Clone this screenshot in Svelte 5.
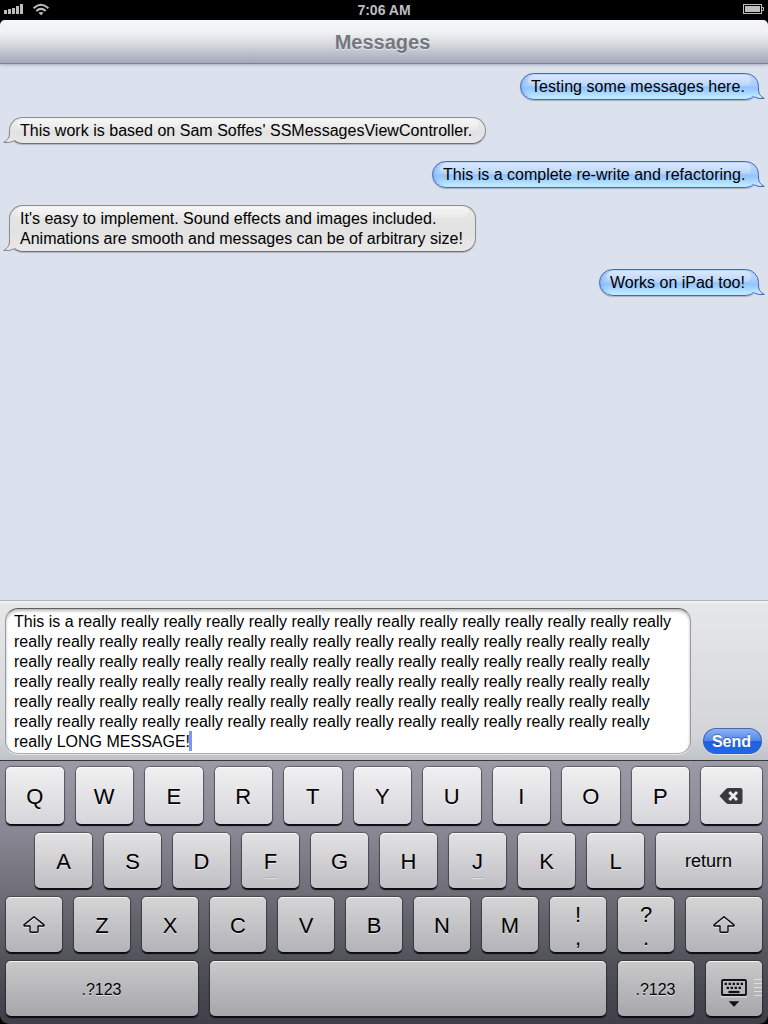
<script>
  const messages = [
    { side: 'out', lines: ['Testing some messages here.'], width: 239, spacing: 0.05 },
    { side: 'in', lines: ["This work is based on Sam Soffes' SSMessagesViewController."], width: 477, spacing: 0.025 },
    { side: 'out', lines: ['This is a complete re-write and refactoring.'], width: 327, spacing: 0 },
    {
      side: 'in',
      lines: [
        "It's easy to implement. Sound effects and images included.",
        'Animations are smooth and messages can be of arbitrary size!'
      ],
      width: 467,
      spacing: 0
    },
    { side: 'out', lines: ['Works on iPad too!'], width: 160, spacing: 0 }
  ];

  const really = (n) => Array(n).fill('really').join(' ');
  const draft = [
    'This is a ' + really(14),
    really(15),
    really(15),
    really(15),
    really(15),
    really(15),
    'really LONG MESSAGE!'
  ];

  const row1 = 'QWERTYUIOP'.split('');
  const row2 = 'ASDFGHJKL'.split('');
  const row3 = 'ZXCVBNM'.split('');
</script>

{#snippet shift()}
  <svg width="24" height="20" viewBox="0 0 24 20">
    <path d="M12 1.7 L2 9.9 Q1.7 11 3 11 H8 V16.2 Q8 17.2 9 17.2 H15 Q16 17.2 16 16.2 V11 H21 Q22.3 11 22 9.9 Z" fill="none" stroke="#ececee" stroke-width="1.3" transform="translate(0 1)" />
    <path d="M12 1.7 L2 9.9 Q1.7 11 3 11 H8 V16.2 Q8 17.2 9 17.2 H15 Q16 17.2 16 16.2 V11 H21 Q22.3 11 22 9.9 Z" fill="none" stroke="#0a0a0a" stroke-width="1.4" stroke-linejoin="round" />
  </svg>
{/snippet}

<div class="screen">
  <div class="status">
    <svg class="left" width="50" height="20" viewBox="0 0 50 20">
      <g fill="#bdbdbf">
        <rect x="4" y="10" width="3" height="4" />
        <rect x="8" y="9" width="3" height="5" />
        <rect x="12" y="8" width="3" height="6" />
        <rect x="16" y="6" width="3" height="8" />
        <rect x="20" y="4" width="3" height="10" />
        <path d="M41 15.2 L38.4 12.8 Q41 11 43.6 12.8 Z" />
      </g>
      <g fill="none" stroke="#bdbdbf" stroke-width="2">
        <path d="M33.6 8.2 Q41 1.4 48.4 8.2" />
        <path d="M36.3 11 Q41 6.8 45.7 11" />
      </g>
    </svg>
    <span>7:06 AM</span>
    <svg class="right" width="26" height="20" viewBox="0 0 26 20">
      <rect x="1.5" y="4.5" width="18" height="9" fill="none" stroke="#bdbdbf" />
      <rect x="3" y="6" width="15" height="6" fill="#bdbdbf" />
      <path d="M20 7.5 H21.5 V10.5 H20" fill="none" stroke="#bdbdbf" />
    </svg>
  </div>
  <div class="nav-back"><header>Messages</header></div>

  <main>
    {#each messages as m}
      <div class="bubble {m.side}" style="width: {m.width}px; letter-spacing: {m.spacing}px">
        <div class="gloss"></div>
        {#each m.lines as line}<p>{line}</p>{/each}
        <svg class="tail" width="24" height="17" viewBox="0 0 24 17">
          <defs>
            <linearGradient id="blue" x1="0" y1="0" x2="0" y2="1">
              <stop offset="0" stop-color="#93c2fb" /><stop offset=".9" stop-color="#c6edff" />
            </linearGradient>
            <linearGradient id="grey" x1="0" y1="0" x2="0" y2="1">
              <stop offset="0" stop-color="#e1e1e1" /><stop offset="1" stop-color="#e9e9e9" />
            </linearGradient>
          </defs>
          <path class="fill" d="M14.5 2 H16.5 C16.3 7.5 18.5 10.5 22.3 12.4 Q17 13.4 12.5 11 L10.8 9.6 Z" />
          <path class="line" d="M16.5 2 C16.3 7.5 18.5 10.5 22.3 12.4 Q17 13.4 12.3 11" />
        </svg>
      </div>
    {/each}
  </main>

  <section class="composer">
    <div class="field">
      {#each draft as line, i}
        <p>{line}{#if i === draft.length - 1}<i class="caret"></i>{/if}</p>
      {/each}
    </div>
    <button class="send">Send</button>
  </section>

  <div class="kb-back">
    <section class="keyboard">
      <div class="row r1">
        {#each row1 as k}<div class="key">{k}</div>{/each}
        <div class="key del">
          <svg width="24" height="16" viewBox="0 0 24 16">
            <path d="M.5 8 L7 1 Q8 0 9.5 0 H21.5 Q23.5 0 23.5 2 V14 Q23.5 16 21.5 16 H9.5 Q8 16 7 15 Z" fill="#3a3a3a" />
            <path d="M10.3 4 L18 12 M18 4 L10.3 12" stroke="#ececef" stroke-width="2.8" />
          </svg>
        </div>
      </div>
      <div class="row r2">
        {#each row2 as k}<div class="key">{k}{#if k === 'F' || k === 'J'}<i class="ridge"></i>{/if}</div>{/each}
        <div class="key word">return</div>
      </div>
      <div class="row r3">
        <div class="key shift">{@render shift()}</div>
        {#each row3 as k}<div class="key">{k}</div>{/each}
        <div class="key two"><span>!</span><span>,</span></div>
        <div class="key two"><span>?</span><span>.</span></div>
        <div class="key shift">{@render shift()}</div>
      </div>
      <div class="row r4">
        <div class="key num">.?123</div>
        <div class="key"></div>
        <div class="key num">.?123</div>
        <div class="key hide">
          <svg width="56" height="55" viewBox="0 0 56 55">
            <rect x="16" y="19" width="24" height="15" fill="none" stroke="#111" stroke-width="1.8" rx="1" />
            <path d="M15 35.8 H41" stroke="#e0e0e2" />
            <g stroke="#111" stroke-width="2.2">
              <path d="M18.6 22.8 H38" stroke-dasharray="2.4 1.6" />
              <path d="M20.6 26.8 H36" stroke-dasharray="2.4 1.6" />
              <path d="M22.5 31 H33.5" />
            </g>
            <path d="M22.7 40.3 H33.3 L28 45.8 Z" fill="#111" />
            <path d="M48 18.5 H56 M48 22.5 H56 M48 26.5 H56 M48 30.5 H56 M48 34.5 H56" stroke="#dedee0" stroke-width="1.2" />
          </svg>
        </div>
      </div>
    </section>
  </div>
</div>

<style>
  :global(body) { margin: 0; }
  .screen {
    width: 768px;
    height: 1024px;
    display: flex;
    flex-direction: column;
    overflow: hidden;
    background: #dbe1ed;
    font-family: "Liberation Sans", Arial, sans-serif;
    color: #000;
  }
  p { margin: 0; white-space: nowrap; }
  svg { display: block; }

  .status {
    height: 20px;
    flex: none;
    display: grid;
    grid-template-columns: 1fr auto 1fr;
    background: #000;
    color: #bfbfc1;
    font-weight: bold;
    font-size: 14px;
    line-height: 21px;
  }
  .status .right { justify-self: end; }

  .nav-back { height: 44px; flex: none; background: #000; }
  header {
    height: 43px;
    border-bottom: 1px solid #7d8093;
    border-radius: 5px 5px 0 0;
    background: linear-gradient(#f6f7f9, #eff0f3 30%, #d8dade 56%, #bec1ce 76%, #a5a8b8);
    box-shadow: 0 1px 3px rgba(90, 100, 120, .4);
    color: #71787f;
    font-weight: bold;
    font-size: 20px;
    line-height: 45px;
    text-align: center;
    text-indent: -3px;
    text-shadow: 0 1px 0 rgba(255, 255, 255, .5);
  }

  main {
    flex: 1;
    min-height: 0;
    display: flex;
    flex-direction: column;
    gap: 17px;
    padding: 9px;
  }
  .bubble {
    position: relative;
    box-sizing: border-box;
    padding: 2.5px 10px 2.5px;
    border: 1px solid;
    border-radius: 14px;
    font-size: 16px;
    line-height: 20px;
  }
  .bubble p { position: relative; z-index: 2; }
  .out {
    align-self: flex-end;
    border-color: #4466b4;
    background: linear-gradient(#c3daf9, #a9cdfb 45%, #93c4fc 55%, #a8d6ff 75%, #cbf2ff);
    box-shadow: 0 1px 1px rgba(80, 90, 120, .35), inset 3px 0 4px -2px #79acf5;
  }
  .in {
    align-self: flex-start;
    border-color: #8d8d8f;
    border-bottom-color: #6f6f71;
    background: linear-gradient(#f0f0f0, #e4e4e4 12px, #e2e2e2 60%, #e9e9e9);
    box-shadow: 0 1px 1px rgba(80, 80, 90, .3);
  }
  .gloss {
    position: absolute;
    inset: 1px 7px auto 7px;
    height: 11px;
    border-radius: 7px;
    background: linear-gradient(rgba(255, 255, 255, .4), rgba(255, 255, 255, .16));
  }
  .tail { position: absolute; right: -8px; bottom: -4px; }
  .in .tail { right: auto; left: -8px; transform: scaleX(-1); }
  .tail .line { fill: none; stroke-width: 1; stroke: #4466b4; }
  .tail .fill { fill: url(#blue); }
  .in .line { stroke: #858587; }
  .in .fill { fill: url(#grey); }

  .composer {
    height: 160px;
    flex: none;
    box-sizing: border-box;
    display: flex;
    align-items: flex-end;
    gap: 12px;
    padding: 0 6px 6px 5px;
    border-top: 1px solid #b2b5bc;
    background: linear-gradient(#f6f7f8, #e6e7e9 3px, #dcdde1 50%, #d3d5d9 85%, #bfc2c7);
  }
  .field {
    box-sizing: border-box;
    width: 686px;
    height: 146px;
    padding: 3px 8px;
    border: 1px solid #98989b;
    border-top-color: #5f5f62;
    border-bottom-color: #aaaaad;
    border-radius: 13px;
    background: #fff;
    box-shadow: inset 0 2px 3px rgba(0, 0, 0, .28), 0 1px 0 rgba(255, 255, 255, .6);
    font-size: 16px;
    line-height: 20px;
  }
  .caret {
    display: inline-block;
    width: 3px;
    height: 20px;
    margin: -1px 0 0 -1px;
    vertical-align: top;
    background: #7f97ee;
  }
  .send {
    width: 59px;
    height: 26px;
    padding: 0;
    border: 1px solid #2b5dc4;
    border-top-color: #4a69ad;
    border-radius: 13px;
    background: linear-gradient(#8eb2f3, #5389ea 48%, #1f60e0 52%, #1f68ea);
    box-shadow: 0 1px 0 rgba(255, 255, 255, .5);
    color: #fff;
    font: bold 16px/25px "Liberation Sans", Arial, sans-serif;
    text-indent: -2px;
    text-shadow: 0 -1px 0 rgba(0, 0, 0, .35);
  }

  .kb-back { height: 264px; flex: none; background: #000; }
  .keyboard {
    height: 264px;
    box-sizing: border-box;
    display: flex;
    flex-direction: column;
    gap: 9px;
    padding: 6px 6px 0;
    border-top: 1px solid #37373b;
    border-radius: 0 0 9px 9px;
    background: linear-gradient(#9d9aa8, #8b8995 25%, #6d6c76 52%, #52525a 76%, #3f3e49);
  }
  .row { display: grid; column-gap: 12px; height: 55px; }
  .r1 { height: 57px; grid-template-columns: repeat(10, 57.5px) 61px; }
  .r2 { padding-left: 29px; grid-template-columns: repeat(9, 57px) 106px; }
  .r3 { grid-template-columns: repeat(10, 56px) 76px; }
  .r4 { grid-template-columns: 192px 396px 76px 56px; }
  .key {
    position: relative;
    display: flex;
    align-items: center;
    justify-content: center;
    box-sizing: border-box;
    padding-top: 2px;
    border-radius: 5px;
    font-size: 22px;
    line-height: 24px;
    box-shadow: 0 0 1px 1px rgba(25, 25, 30, .45), 0 2px 1px #08080a, inset 0 1px 0 rgba(255, 255, 255, .8);
    text-shadow: 0 1px 0 rgba(255, 255, 255, .6);
  }
  .r1 .key { background: linear-gradient(#f0f0f1, #d6d5db); }
  .r2 .key { background: linear-gradient(#e2e2e3, #c0bfc5); }
  .r3 .key { background: linear-gradient(#d5d5d6, #b3b3b8); }
  .r4 .key { background: linear-gradient(#c9c9ca, #a7a7ab); }
  .key.word { font-size: 18px; padding: 0 1px 0 0; }
  .key.num { font-size: 16px; padding-right: 1px; }
  .key.two { flex-direction: column; padding: 2px 0 0; line-height: 23px; }
  .key.hide { padding: 0; }
  .key.del { padding: 1px 1px 0 0; }
  .key.shift { padding: 0; }
  .ridge {
    position: absolute;
    left: 50%;
    bottom: 9px;
    width: 12px;
    height: 1px;
    margin-left: -6px;
    border-top: 1px solid #b3b2b8;
    background: #dfdfe2;
  }
</style>
